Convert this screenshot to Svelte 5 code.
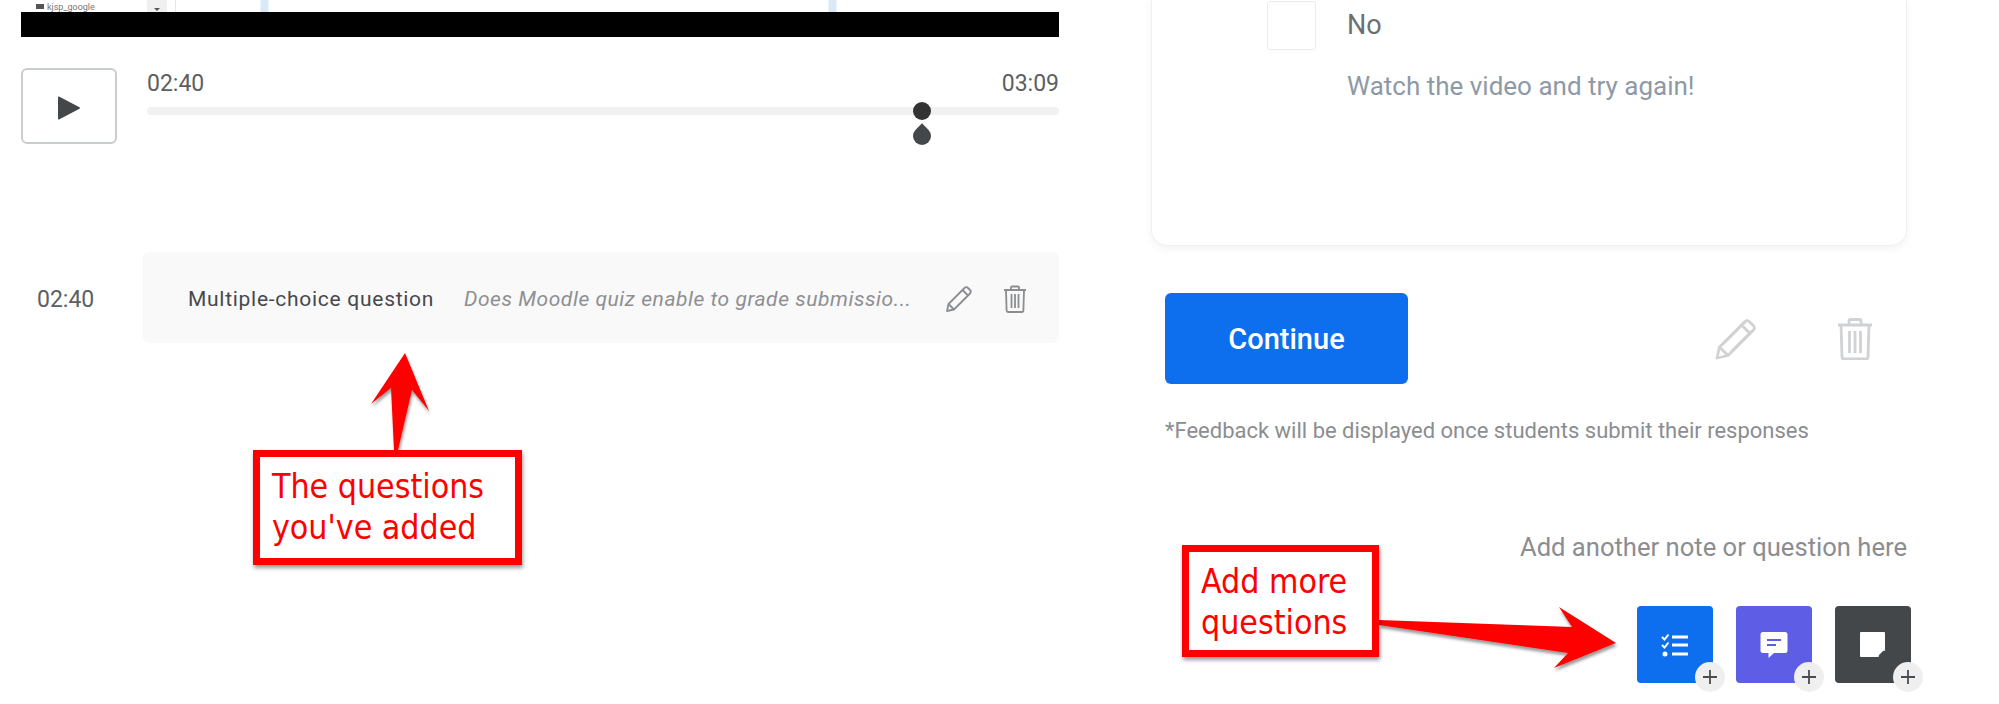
<script lang="ts">
	const addButtons = [
		{ cls: 'quiz', icon: 'list' },
		{ cls: 'chat', icon: 'chat' },
		{ cls: 'note', icon: 'note' }
	];
</script>

<div class="page">
	<section class="left">
		<div class="video">
			<div class="thumb">
				<div class="course"><span class="cap"></span>kjsp_google</div>
				<div class="select"><i></i></div>
				<div class="slide"></div>
			</div>
			<div class="bar"></div>
		</div>

		<div class="player">
			<button class="play" aria-label="Play">
				<svg width="24" height="26" viewBox="0 0 24 26"><path d="M1 2.500v21a1 1 0 0 0 1.500.8L22.500 13.800a1 1 0 0 0 0-1.600L2.500 1.700A1 1 0 0 0 1 2.500z" fill="#44474a" /></svg>
			</button>
			<div class="timeline">
				<div class="times"><span>02:40</span><span>03:09</span></div>
				<div class="track">
					<span class="knob"></span>
					<span class="drop"></span>
				</div>
			</div>
		</div>

		<div class="entry">
			<span class="stamp">02:40</span>
			<div class="entry-box">
				<span class="kind">Multiple-choice question</span>
				<span class="question">Does Moodle quiz enable to grade submissio...</span>
				<svg class="edit" width="28" height="28" viewBox="0 0 28 28" fill="none" stroke="#8b8d91" stroke-width="1.800" stroke-linejoin="round"><path d="M2 26l1.500-7L19.500 3a2.500 2.500 0 0 1 3.500 0l2 2a2.500 2.500 0 0 1 0 3.500L9 24.500z" /><path d="M3.500 19L9 24.500M17.500 5l5.500 5.500" /></svg>
				<svg class="bin" width="24" height="28" viewBox="0 0 24 28" fill="none" stroke="#8b8d91" stroke-width="1.800" stroke-linejoin="round"><path d="M1 5h22M8 5V2.500a1 1 0 0 1 1-1h6a1 1 0 0 1 1 1V5M3 5l.6 20.500a1.500 1.500 0 0 0 1.500 1.500h13.800a1.500 1.500 0 0 0 1.500-1.500L21 5M8.500 9v14M12 9v14M15.500 9v14" /></svg>
			</div>
		</div>
	</section>

	<section class="right">
		<div class="card">
			<div class="option">
				<span class="check"></span>
				<div class="option-text">
					<div class="answer">No</div>
					<div class="hint">Watch the video and try again!</div>
				</div>
			</div>
		</div>

		<div class="actions">
			<button class="continue">Continue</button>
			<div class="action-icons">
				<svg width="42" height="42" viewBox="0 0 42 42" fill="none" stroke="#d0d2d4" stroke-width="2.800" stroke-linejoin="round"><path d="M2 40l2.500-11L30 3.500a3 3 0 0 1 4.200 0l4.300 4.300a3 3 0 0 1 0 4.200L13 37.500z" /><path d="M4.500 29l8.500 8.500M26.500 7l8.500 8.500M8 26l22-22M16 34l21-21" /></svg>
				<svg width="36" height="42" viewBox="0 0 36 42" fill="none" stroke="#d0d2d4" stroke-width="2.800" stroke-linejoin="round"><path d="M1 7h34M12 7V3a1.500 1.500 0 0 1 1.500-1.500h9A1.500 1.500 0 0 1 24 3v4M4 7l1 32a2 2 0 0 0 2 2h22a2 2 0 0 0 2-2l1-32M12.500 13v22M18 13v22M23.500 13v22" /></svg>
			</div>
		</div>

		<p class="feedback">*Feedback will be displayed once students submit their responses</p>

		<p class="add-label">Add another note or question here</p>

		<div class="add-row">
			{#each addButtons as b}
				<button class="add {b.cls}" aria-label={b.icon}>
					{#if b.icon === 'list'}
						<svg width="28" height="24" viewBox="0 0 28 24" fill="none" stroke="#fff"><path d="M1 4l2.500 2.500L7.500 1.500M1 12l2.500 2.500 4-5" stroke-width="2" /><circle cx="4" cy="21" r="2.500" fill="#fff" stroke="none" /><path d="M11 4h16M11 12h16M11 21h16" stroke-width="3.200" /></svg>
					{:else if b.icon === 'chat'}
						<svg width="28" height="28" viewBox="0 0 28 28"><path d="M3 1h22a2.500 2.500 0 0 1 2.500 2.500v16A2.500 2.500 0 0 1 25 22H14l-5.500 5v-5H3A2.500 2.500 0 0 1 .5 19.500v-16A2.500 2.500 0 0 1 3 1z" fill="#fff" /><path d="M7 9h14M7 14h9" stroke="#5d5de6" stroke-width="2" /></svg>
					{:else}
						<svg width="26" height="26" viewBox="0 0 26 26"><path d="M1 0h23a1 1 0 0 1 1 1v16l-8 8H1a1 1 0 0 1-1-1V1a1 1 0 0 1 1-1z" fill="#fff" /><path d="M18 25v-7h7" fill="none" stroke="#fff" stroke-width="1.500" /></svg>
					{/if}
					<span class="plus">
						<svg width="14" height="14" viewBox="0 0 14 14"><path d="M7 0v14M0 7h14" stroke="#4a4c4f" stroke-width="1.800" /></svg>
					</span>
				</button>
			{/each}
		</div>
	</section>

	<!-- callouts drawn over the screenshot -->
	<svg class="arrows" width="1999" height="704" viewBox="0 0 1999 704">
		<defs>
			<filter id="soft" x="-20%" y="-20%" width="140%" height="140%">
				<feDropShadow dx="1" dy="3" stdDeviation="1.500" flood-color="#000" flood-opacity="0.4" />
			</filter>
		</defs>
		<path d="M405 353L371 404 391 388 394 450 398 450 412 390 429 411z" fill="#f00" filter="url(#soft)" />
		<path d="M1379 620L1572 627 1559 607 1616 643 1554 668 1568 653 1379 625z" fill="#f00" filter="url(#soft)" />
	</svg>
	<div class="callout one">The questions<br />you've added</div>
	<div class="callout two">Add more<br />questions</div>
</div>

<style>
	:global(body) {
		background: #fff;
	}

	.page {
		position: relative;
		width: 1999px;
		height: 704px;
		overflow: hidden;
		display: flex;
		font-family: Roboto, 'Liberation Sans', sans-serif;
		color: #44474a;
	}

	button {
		font-family: inherit;
		border: none;
		padding: 0;
		cursor: pointer;
	}

	.left {
		width: 1038px;
		margin-left: 21px;
	}

	.thumb {
		height: 12px;
		overflow: hidden;
		display: flex;
		font-size: 9px;
		color: #777;
	}

	.course {
		width: 126px;
		padding: 2px 0 0 15px;
		box-sizing: border-box;
		line-height: 10px;
		display: flex;
		gap: 3px;
	}

	.cap {
		width: 8px;
		height: 5px;
		margin-top: 2px;
		background: #555;
	}

	.select {
		width: 20px;
		background: #f0f0f0;
		position: relative;
	}

	.select i {
		position: absolute;
		left: 7px;
		top: 8px;
		border: 3px solid transparent;
		border-top-color: #555;
	}

	.slide {
		flex: 1;
		margin-left: 8px;
		border-left: 1px solid #e6e6e6;
		background: linear-gradient(90deg, #fff 84px, #d9e9f7 85px, #d9e9f7 92px, #fff 93px, #fff 652px, #d9e9f7 653px, #d9e9f7 660px, #fff 661px);
	}

	.bar {
		height: 25px;
		background: #000;
	}

	.player {
		display: flex;
		margin-top: 31px;
	}

	.play {
		width: 96px;
		height: 76px;
		background: #fff;
		border: 2px solid #c9cdd1;
		border-radius: 6px;
		display: flex;
		align-items: center;
		justify-content: center;
		flex: none;
		padding-top: 4px;
	}

	.timeline {
		flex: 1;
		margin-left: 30px;
	}

	.times {
		display: flex;
		justify-content: space-between;
		font-size: 23px;
		line-height: 30px;
		padding-top: 1px;
		color: #5c5f62;
	}

	.track {
		position: relative;
		height: 8px;
		margin-top: 8px;
		background: #f1f1f1;
		border-radius: 4px;
	}

	.knob {
		position: absolute;
		left: 766px;
		top: -5px;
		width: 18px;
		height: 18px;
		border-radius: 50%;
		background: #333;
	}

	.drop {
		position: absolute;
		left: 766px;
		top: 20px;
		width: 18px;
		height: 18px;
		border-radius: 50% 0 50% 50%;
		transform: rotate(-45deg);
		background: #44474a;
	}

	.entry {
		display: flex;
		align-items: center;
		margin-top: 108px;
	}

	.stamp {
		width: 122px;
		padding: 3px 0 0 16px;
		box-sizing: border-box;
		font-size: 23px;
		color: #5c5f62;
	}

	.entry-box {
		flex: 1;
		height: 91px;
		box-sizing: border-box;
		background: #f9f9f9;
		border-radius: 6px;
		display: flex;
		align-items: center;
		padding: 2px 0 0 45px;
	}

	.kind {
		width: 276px;
		font-size: 21px;
		letter-spacing: 0.72px;
		color: #46484b;
		white-space: nowrap;
	}

	.question {
		width: 481px;
		font-size: 21px;
		letter-spacing: 0.55px;
		font-style: italic;
		color: #8d8f93;
		white-space: nowrap;
	}

	.edit {
		margin-right: 30px;
	}

	.right {
		width: 756px;
		margin-left: 92px;
	}

	.card {
		height: 247px;
		box-sizing: border-box;
		margin-top: -1px;
		border: 1px solid #f0f0f0;
		border-top: none;
		border-radius: 0 0 16px 16px;
		box-shadow: 0 3px 8px rgba(0, 0, 0, 0.05);
		padding: 2px 0 0 115px;
	}

	.option {
		display: flex;
		gap: 31px;
	}

	.check {
		width: 49px;
		height: 49px;
		box-sizing: border-box;
		border: 1px solid #ebebeb;
		border-radius: 3px;
		flex: none;
	}

	.answer {
		padding-top: 1px;
		font-size: 27px;
		line-height: 46px;
		color: #6d6f72;
	}

	.hint {
		margin-top: 22px;
		font-size: 26px;
		line-height: 32px;
		color: #8e99a6;
	}

	.actions {
		display: flex;
		align-items: center;
		margin: 47px 0 0 14px;
	}

	.continue {
		width: 243px;
		height: 91px;
		background: #0d6fee;
		color: #fff;
		font-size: 29px;
		font-weight: 500;
		border-radius: 6px;
	}

	.action-icons {
		display: flex;
		gap: 80px;
		margin-left: 307px;
	}

	.feedback {
		margin: 34px 0 0 14px;
		font-size: 22px;
		line-height: 26px;
		color: #8b8d91;
		white-space: nowrap;
	}

	.add-label {
		margin: 88px 0 0 0;
		font-size: 25.600px;
		line-height: 30px;
		color: #8b8d91;
		text-align: right;
		white-space: nowrap;
	}

	.add-row {
		display: flex;
		justify-content: flex-end;
		gap: 23px;
		margin: 44px -4px 0 0;
	}

	.add {
		position: relative;
		width: 76px;
		height: 77px;
		border-radius: 4px;
		display: flex;
		align-items: center;
		justify-content: center;
	}

	.quiz {
		background: #0d6fee;
	}

	.chat {
		background: #5d5de6;
	}

	.note {
		background: #44474a;
	}

	.plus {
		position: absolute;
		right: -12px;
		bottom: -9px;
		width: 30px;
		height: 30px;
		border-radius: 50%;
		background: #efefef;
		display: flex;
		align-items: center;
		justify-content: center;
	}

	.arrows {
		position: absolute;
		left: 0;
		top: 0;
		pointer-events: none;
	}

	.callout {
		position: absolute;
		box-sizing: border-box;
		border: 7px solid #f00;
		background: #fff;
		box-shadow: 1px 3px 4px rgba(0, 0, 0, 0.4);
		color: #f00;
		font-family: 'DejaVu Sans', sans-serif;
		font-stretch: condensed;
		font-size: 33.600px;
		line-height: 41px;
		padding: 9px 0 0 12px;
		white-space: nowrap;
	}

	.one {
		left: 253px;
		top: 450px;
		width: 269px;
		height: 115px;
	}

	.two {
		left: 1182px;
		top: 545px;
		width: 197px;
		height: 112px;
	}
</style>
